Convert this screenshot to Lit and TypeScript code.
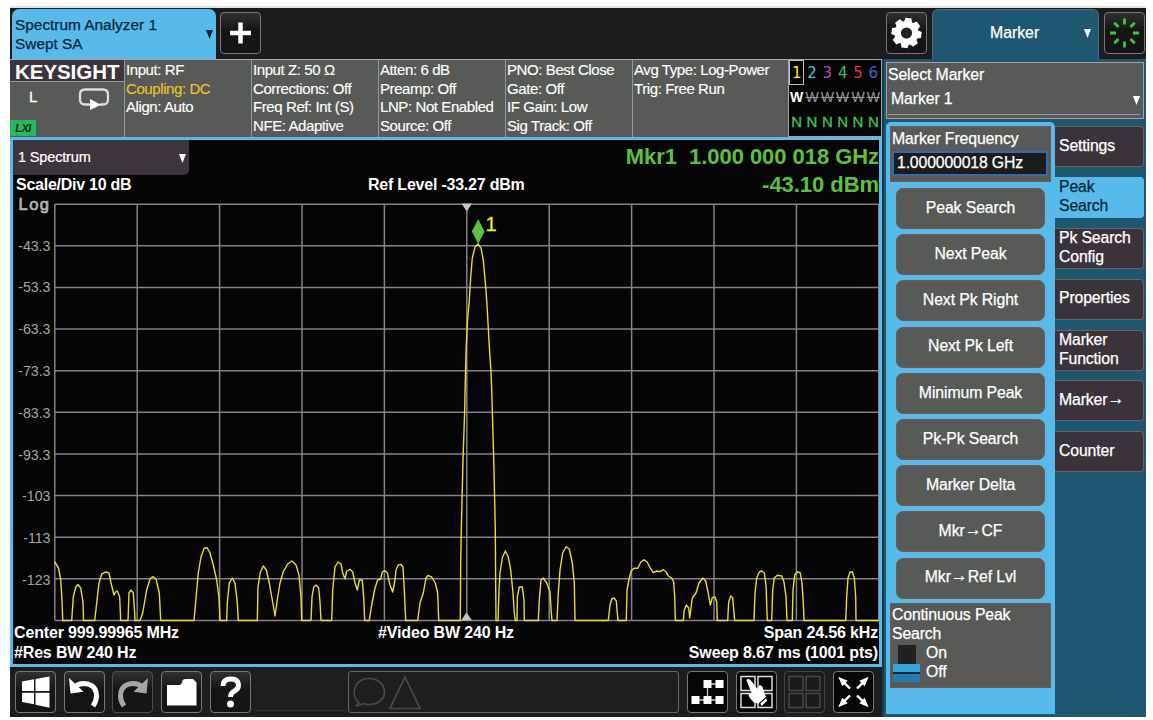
import { LitElement, html, svg, css } from "lit";
import { customElement, state } from "lit/decorators.js";
import { classMap } from "lit/directives/class-map.js";

const FLOOR = 620.5;

// Noise-floor lobes and the main carrier, each a run of points that starts and ends on the floor.
const TRACE: string =
  "54.5,561.7 58.5,568 60.7,580 62,600 62.7,F 71.7,F 73.3,597 75.7,587 78,584.5 80.7,588 83,602 83.5,F " +
  "94.7,F 96.7,603 99,583 101.7,574 106,572 109,573 111,583 114,595 115.5,592 117.3,591 119.7,597 120.7,F " +
  "128,F 129,593 131,590 133.3,593 134.7,613 135,F 140,F 142.7,613 146.7,590 150,579 153,576.5 156,579 159.3,593 160.7,F " +
  "194,F 196,598 198.3,573 201,557 204,548.5 207,547.5 210,553 213.3,565 216.7,580 219,598 220,F " +
  "226.7,F 227.3,603 229.3,583 232.3,578 235,583 237.3,603 238.3,F " +
  "257.3,F 258,587 260.3,572 263.3,566 266.3,570 269.3,583 272.7,602 275,616 277.7,597 280,583 283.3,571.7 287.7,564 292,561 296,565 299,575 301,597 301.7,F " +
  "311,F 312,597 313.7,587 316,585 318.7,588 320,602 321,F " +
  "331.7,F 332.7,590 335,567 338,562 341,564 342.7,573 345,579 346.7,571 350,569.3 352.7,572 355,583 357.3,590 359.3,580 362.3,580 363.7,597 364.7,F " +
  "369.3,F 371.7,605 375,588 377.7,580 380.7,579 382.3,572 384.7,570.7 387.3,572.7 390,585 392.7,592 395,580 396,570 398.3,565 400.7,564.3 403,567 404.3,590 405.7,F " +
  "417.7,F 420,603 423.3,593 426,578 428,575.3 431.7,577 435.3,583 437.7,593 438.7,F " +
  "460.3,F 460.7,563 461.3,530 463,460 464.7,410 465,393 466,353 467.3,323 469.3,300 470.7,277 472.3,258 475,247 478,244 481,248 483.3,260 485.7,287 487,305 488.3,328 489.7,353 491,372 491.7,390 492.3,410 494,470 495.3,530 495.7,587 496,F " +
  "498,F 499,590 500,573 502.3,558 505.3,551 508.3,557 510.7,570 513,593 514.3,613 515.3,F " +
  "517,F 517.3,597 519.3,587 522.3,587 524,600 524.3,F 538.3,F 539.3,600 541,580 543.3,578 546.7,583 550,592 551.3,613 552,F " +
  "557,F 558.3,593 560,570 562.7,553 566,546.7 569.3,549 572.3,563 574.3,583 575,F " +
  "608.3,F 610,605 611.7,599 614,598 616.3,601 617.3,613 618,F " +
  "626.3,F 627,590 629.3,578 631.3,570.7 634,568.3 637.7,568.3 640.7,562.3 644,559.7 647.3,562.3 650,567.7 653.3,572.7 656.7,571 660,571.7 663.3,569.7 666,571.7 668.3,576 671.7,578 673.7,582 674.7,597 675.3,F " +
  "683.3,F 684.3,610 686.3,605 688.7,608 689.7,618 692.3,598 696,593 699,583 702.7,578 705.7,581 708,592 710.3,605 712.3,597.7 715,596.7 716.7,602 717.3,F " +
  "727.7,F 728.7,602 730.7,596 732.7,597.7 734,613 734.7,F " +
  "754,F 755,593 756.7,578 759.3,572 761.7,571 764.3,573 766,585 767.3,F " +
  "771.7,F 772.7,590 774.3,578 777.3,575.3 781.7,576 784,582 786,597 787,F " +
  "792.3,F 793,590 794.7,575 797.3,571.7 800.3,573 802,583 803.3,603 804,F " +
  "845.7,F 846.7,597 848,578 850,572.3 852.3,571.7 854.3,578 855.7,597 856,F 879,F";

const STATUS: string[][] = [
  ["Input: RF", "Coupling: DC", "Align: Auto"],
  ["Input Z: 50 Ω", "Corrections: Off", "Freq Ref: Int (S)", "NFE: Adaptive"],
  ["Atten: 6 dB", "Preamp: Off", "LNP: Not Enabled", "Source: Off"],
  ["PNO: Best Close", "Gate: Off", "IF Gain: Low", "Sig Track: Off"],
  ["Avg Type: Log-Power", "Trig: Free Run"],
];

const ACTIONS = ["Peak Search", "Next Peak", "Next Pk Right", "Next Pk Left", "Minimum Peak",
  "Pk-Pk Search", "Marker Delta", "Mkr→CF", "Mkr→Ref Lvl"];
const TABS = ["Settings", "Peak Search", "Pk Search Config", "Properties", "Marker Function", "Marker→", "Counter"];
const LEVELS = ["-43.3", "-53.3", "-63.3", "-73.3", "-83.3", "-93.3", "-103", "-113", "-123"];

const caret = html`<svg class="caret" width="7" height="9" viewBox="0 0 7 9"><path d="M0 0h7L3.5 9z" fill="currentColor"/></svg>`;

// Lifts the arrow glyph so that it sits at the middle of the lowercase letters.
const label = (s: string) => {
  const [a, b] = s.split("→");
  return b === undefined ? html`<span>${s}</span>` : html`<span>${a}<span class="to">→</span>${b}</span>`;
};

const icon = (body: unknown) => html`<svg width="39" height="40" viewBox="0 0 39 40">${body}</svg>`;

const arrow = (angle: number) => svg`<g transform="rotate(${angle} 19.5 20)">
  <path d="M19.500 15V6" stroke="#fff" stroke-width="2.300"/><path d="M19.500-1.500L23.300 8h-7.600z" fill="#fff"/></g>`;

const ICONS = {
  plus: icon(svg`<path d="M19.500 9.500v21M9 20h21" stroke="#fff" stroke-width="4.500"/>`),
  gear: icon(svg`<g fill="#fff">${[0, 45, 90, 135].map(a => svg`<path d="M15.500 9l1-4h6l1 4v22l-1 4h-6l-1-4z" transform="rotate(${a + 8} 19.500 20)"/>`)}
    <circle cx="19.5" cy="20" r="12"/></g><circle cx="19.5" cy="20" r="5.600" fill="#222"/>`),
  busy: icon(svg`${[0, 45, 90, 135, 180, 225, 270, 315].map(a => svg`<path d="M19.500 5.500v6" stroke="#3fc83f" stroke-width="2.800" transform="rotate(${a} 19.500 20)"/>`)}`),
  windows: icon(svg`<path d="M6 9.500l12-2.200V19H6zM19.500 7l14-2.500V19h-14zM6 20.700h12v11.500L6 30zM19.500 20.700h14v15l-14-3z" fill="#fff"/>`),
  undo: icon(svg`<path d="M9.500 15C17 8.500 31.500 11 31.500 24q0 5-3.500 10" fill="none" stroke="#fff" stroke-width="5"/><path d="M4 6l1.500 15.500 13-1.800z" fill="#fff"/>`),
  redo: icon(svg`<path d="M29.500 15C22 8.500 7.500 11 7.500 24q0 5 3.500 10" fill="none" stroke="#a6a6a6" stroke-width="5"/><path d="M35 6l-1.500 15.500-13-1.800z" fill="#a6a6a6"/>`),
  folder: icon(svg`<path d="M5 33.500V13h12q2.500 0 3-3t3.500-3H31l3.500 3.500v23z" fill="#fff"/>`),
  help: icon(svg`<path d="M12 14q0-7 8-7 7.500 0 7.500 6 0 4-4 6t-4 6" fill="none" stroke="#fff" stroke-width="5"/><circle cx="19.5" cy="32" r="3.500" fill="#fff"/>`),
  blocks: icon(svg`<path d="M19.500 12v16M19 12h13M8 28h24" stroke="#ccc" stroke-width="1.300" fill="none"/><path d="M15.500 8h8v8h-8zM27.500 8h8v8h-8zM3.500 24h8v8h-8zM15.500 24h8v8h-8zM27.500 24h8v8h-8z" fill="#fff"/>`),
  touch: icon(svg`<path d="M4 4.500h14v14H4zM21 4.500h14v14H21zM4 21.500h14v14H4zM21 21.500h14v14H21z" fill="none" stroke="#ddd" stroke-width="1.500"/>
    <path d="M9.500 8.500q1-2.500 4-.5l7 9 1.500-3.500q2-1 3.500 1.500l3.500 10-7.500 6.500q-6-.500-9.500-7-1.500-4 3-2.500z" fill="#fff"/><path d="M23 31.500l6-5.500 1.500 2.500-6 6z" fill="#fff" stroke="#111" stroke-width=".7"/>`),
  grid: icon(svg`<path d="M4 4.500h14v14H4zM21 4.500h14v14H21zM4 21.500h14v14H4zM21 21.500h14v14H21z" fill="none" stroke="#484848" stroke-width="1.500"/>`),
  expand: icon(svg`${[45, 135, 225, 315].map(arrow)}`),
};

@customElement("spectrum-plot")
class SpectrumPlot extends LitElement {
  static styles = css`
    :host { display: block; height: 428px; font-weight: normal; }
    svg { display: block; }
    text { font-family: "Liberation Sans", Arial, sans-serif; }
    .grid { stroke: #858285; stroke-width: 1.5; }
    .level { fill: #a4a4a4; font-size: 14.2px; text-anchor: end; }
    .unit { fill: #b4b4b4; font-size: 16.5px; stroke: #b4b4b4; stroke-width: .7; }
    .id { fill: #f0ea2c; font-size: 20px; stroke: #f0ea2c; stroke-width: .3; }
    .trace { fill: none; stroke: #e4df32; stroke-width: 1.4; stroke-linejoin: round; }
  `;
  render() {
    const cols = Array.from({ length: 11 }, (_, i) => 54.8 + i * 82.4);
    const rows = Array.from({ length: 11 }, (_, i) => 204.2 + i * 41.63);
    return html`<svg width="866" height="428" viewBox="13 196 866 428">
      <g class="grid">
        ${cols.map(x => svg`<line x1=${x} x2=${x} y1="204" y2="620.5"/>`)}
        ${rows.map(y => svg`<line x1="54.8" x2="879" y1=${y} y2=${y}/>`)}
      </g>
      <path d="M461.500 203.500h10.500l-5.200 8zM461 620.500h11l-5.500-8z" fill="#c4c4c4"/>
      <text class="unit" x="18.500" y="210" textLength="30.500">Log</text>
      ${LEVELS.map((l, i) => svg`<text class="level" x="50.500" y=${250.5 + i * 41.8}>${l}</text>`)}
      <polyline class="trace" points=${TRACE.replace(/F/g, String(FLOOR))}/>
      <path d="M478.200 219l6.300 12.500-6.300 12.500-6.300-12.500z" fill="#5cc142"/>
      <text class="id" x="485.500" y="231">1</text>
    </svg>`;
  }
}

@customElement("app-root")
class AppRoot extends LitElement {
  @state() private tab = 1;

  static styles = css`
    :host { display: block; width: 1153px; height: 720px; background: #fff; box-sizing: border-box; padding: 6px 7px 0 10px; overflow: hidden;
      font: 15px/18.5px "Liberation Sans", Arial, sans-serif; color: #fff; }
    * { box-sizing: border-box; }
    svg { display: block; flex: none; }
    .screen { display: grid; grid-template-columns: 872px 264px; width: 1136px; height: 711px; border-top: 2px solid #dfe1e3; background: #1c1c1c; }
    .main, .side { display: flex; flex-direction: column; min-width: 0; }
    .topbar { display: flex; height: 51px; align-items: flex-start; }
    .mode { width: 204px; height: 50px; margin: 1px 0 0 2px; padding: 7px 10px 0 3px; border-radius: 7px 7px 0 0; background: #57baea; color: #0b2736; display: flex;
      justify-content: space-between; font-size: 15.4px; -webkit-text-stroke: .25px currentColor; }
    .mode .caret { margin: 14px -7px 0 0; color: #062231; }
    .btn { width: 41px; height: 42px; border: 1.5px solid #777; border-radius: 4px; background: linear-gradient(#303030, #151515 45%, #151515); display: grid; place-items: center; overflow: hidden; flex: none; }
    .btn.dark { background: #060606; }
    .btn.dim { border-color: #444; background: #1b1b1b; }
    .btn.redo { border-color: #4c4c4c; }
    .add { margin: 4px 0 0 4px; }
    .status { display: flex; height: 78px; background: #575a57; border-top: 1px solid #a5a5a5; }
    .brand { width: 114px; flex: none; display: flex; flex-direction: column; }
    .logo { height: 22px; background: #3c353b; border-bottom: 1px solid #999; font-weight: bold; font-size: 20.5px; line-height: 24px; padding-left: 5px; letter-spacing: -.05px; white-space: nowrap; }
    .sweep { display: flex; height: 38px; padding: 6px 14px 0 19px; justify-content: space-between; -webkit-text-stroke: .3px currentColor; }
    .lxi { width: 26px; height: 16px; background: #2fb45f; color: #082d16; font: italic bold 11px/17px "Liberation Sans", sans-serif; text-align: center; letter-spacing: -.5px; }
    .cell { width: 127px; flex: none; border-left: 1.5px solid #979797; padding: 1px 0 0 1px; font-size: 15px; letter-spacing: -.41px; white-space: pre; -webkit-text-stroke: .15px currentColor; }
    .cell:nth-child(6) { flex: 1; }
    .warn { color: #efc12c; }
    .traces { width: 94px; background: #050505; border: 1px solid #a5a5a5; border-top: 0; display: grid; grid-template: 25px 25px 26px / repeat(6, 1fr); font: 15px/26px "DejaVu Sans", sans-serif; text-align: center; }
    .traces .box { outline: 1.5px solid #bbd; outline-offset: -1px; }
    .t1 { color: #eee837; } .t2 { color: #4cc6d0; } .t3 { color: #b545b8; } .t4 { color: #45bd69; } .t5 { color: #ef2b55; } .t6 { color: #3567cb; }
    .w { font: bold 14px/24px "Liberation Sans", sans-serif; }
    .w.off { color: #999; font-weight: normal; text-decoration: line-through; }
    .n { color: #3fc553; font: 15px/24px "Liberation Sans", sans-serif; -webkit-text-stroke: .3px currentColor; }
    .panel { height: 530px; border: 3px solid #57baea; background: #050505; display: flex; flex-direction: column; font-weight: bold; font-size: 16px; }
    .head { display: flex; height: 56px; }
    .view { width: 176px; height: 35px; background: #3c353b; border-radius: 0 0 5px 0; padding: 8px 3px 0 5px; display: flex; justify-content: space-between; font-weight: normal; font-size: 14.5px; letter-spacing: -.15px; -webkit-text-stroke: .2px currentColor; }
    .view .caret { margin-top: 6px; }
    .left-head { display: flex; flex-direction: column; }
    .scale { padding: 1px 0 0 3px; letter-spacing: -.25px; }
    .ref { padding-top: 36px; margin-left: 179px; letter-spacing: -.22px; white-space: nowrap; }
    .readout { flex: 1; color: #5cc142; font-size: 22px; line-height: 28px; text-align: right; white-space: pre; padding-top: 3px; letter-spacing: -.05px; }
    .foot { display: grid; grid-template-columns: 1fr 1fr 1fr; height: 40px; line-height: 20px; padding: 0 1px; letter-spacing: -.16px; margin-top: -1px; }
    .foot > :nth-child(2) { text-align: center; }
    .foot > :nth-child(3) { text-align: right; }
    .toolbar { display: flex; height: 50px; padding: 4px 8px 0 5px; gap: 7.7px; background: #1e1e1e; }
    .rule { width: 90px; height: 40px; border-bottom: 1px solid #303030; margin: 0 -6px 0 -2px; }
    .msg { flex: 1; height: 42px; border: 1.5px solid #666; border-radius: 3px; }
    .side { background: #1d5770; border-left: 2px solid #123d50; padding-left: 2px; font-size: 15.8px; -webkit-text-stroke: .25px currentColor; }
    .side .topbar { background: #1c1c1c; margin-left: -4px; padding: 4px 0 0 4px; }
    .marker { width: 167px; height: 50px; margin: -3px 5px 0 5px; border-radius: 6px 6px 0 0; background: #1d5770; border: 1px solid #526e7a; border-bottom: 0; display: flex; align-items: center; padding: 0 7px 2px 57px; justify-content: space-between; }
    .select { width: 258px; height: 57px; margin-top: 3px; flex: none; background: #575a57; border: 1.5px solid #aaa19d; padding: 3px 3px 3px 1px; display: flex; flex-direction: column; letter-spacing: -.1px; }
    .select div { display: flex; justify-content: space-between; height: 32px; padding: 5px 0 0 3px; border-bottom: 1.5px solid #999; }
    .select .caret { margin-top: 6px; }
    .body { display: flex; margin-top: 3px; height: 592px; }
    .sheet { width: 169px; height: 592px; background: #57baea; border-radius: 5px 5px 0 0; padding: 4px; display: flex; flex-direction: column; }
    .group { width: 161px; background: #575a57; border: 1.5px solid #74594e; flex: none; letter-spacing: -.1px; }
    .freq { height: 56px; padding: 3px 1px 0; }
    .freq input { display: block; width: 156px; height: 25px; margin-top: 2px; border: 2px solid #3568b2; background: #1c1c1c; color: #fff; padding: 0 3px; font: inherit; letter-spacing: -.15px; -webkit-text-stroke: .25px currentColor; }
    .acts { display: flex; flex-direction: column; gap: 5.2px; padding: 6px 6px 4.5px; }
    .act { height: 41px; flex: none; border-radius: 7px; border: 1.5px solid #75594d; background: #575a57; display: grid; place-items: center; letter-spacing: -.1px; padding-bottom: 1px; }
    .to { font-size: 17px; line-height: 1px; vertical-align: 1.5px; }
    .cont { height: 85px; padding: 2px 0 0 1px; letter-spacing: -.13px; }
    .toggle { display: flex; gap: 6px; margin-top: 1px; }
    .knob { width: 27px; height: 37px; display: flex; flex-direction: column; align-items: center; margin: 1px 0 0 1px; }
    .slot { width: 18px; height: 19px; background: #222; }
    .lever { width: 27px; height: 18px; background: linear-gradient(#37a5d7 0 45%, #123 45% 55%, #237eb0 55%); }
    .tabs { display: flex; flex-direction: column; gap: 9.9px; padding-top: 4px; }
    .tab { width: 89px; height: 41px; border: 1.5px solid #725e5d; border-left: 0; border-radius: 0 4px 4px 0; background: #3a343a; display: flex; align-items: center; padding: 0 0 1px 4px; letter-spacing: -.13px; }
    .tab.on { background: #57baea; border-color: #57baea; color: #0b2736; padding-right: 30px; }
  `;

  render() {
    return html`<div class="screen">
      <div class="main">
        <div class="topbar">
          <div class="mode"><div>Spectrum Analyzer 1<br>Swept SA</div>${caret}</div>
          <div class="btn add">${ICONS.plus}</div>
        </div>
        <div class="status">
          <div class="brand">
            <div class="logo">KEYSIGHT</div>
            <div class="sweep"><span>L</span><svg width="32" height="24" viewBox="0 0 32 24"><path d="M12 16.500H7q-5 0-5-5V6.500q0-5 5-5h18q5 0 5 5v5q0 5-5 5h-3" fill="none" stroke="#ddd" stroke-width="2.300"/><path d="M12 11l11 5.700L12 22z" fill="#fff"/></svg></div>
            <div class="lxi">LXI</div>
          </div>
          ${STATUS.map(c => html`<div class="cell">${c.map(l => html`<div class=${classMap({ warn: l.startsWith("Coupling") })}>${l}</div>`)}</div>`)}
          <div class="traces">
            ${[1, 2, 3, 4, 5, 6].map(n => html`<span class="t${n} ${n === 1 ? "box" : ""}">${n}</span>`)}
            ${[1, 2, 3, 4, 5, 6].map(n => html`<span class="w ${n > 1 ? "off" : ""}">W</span>`)}
            ${[1, 2, 3, 4, 5, 6].map(() => html`<span class="n">N</span>`)}
          </div>
        </div>
        <div class="panel">
          <div class="head">
            <div class="left-head"><div class="view"><span>1 Spectrum</span>${caret}</div><div class="scale">Scale/Div 10 dB</div></div>
            <div class="ref">Ref Level -33.27 dBm</div>
            <div class="readout">Mkr1  1.000 000 018 GHz<br>-43.10 dBm</div>
          </div>
          <spectrum-plot></spectrum-plot>
          <div class="foot">
            <div>Center 999.99965 MHz<br>#Res BW 240 Hz</div><div>#Video BW 240 Hz</div><div>Span 24.56 kHz<br>Sweep 8.67 ms (1001 pts)</div>
          </div>
        </div>
        <div class="toolbar">
          <div class="btn">${ICONS.windows}</div><div class="btn">${ICONS.undo}</div><div class="btn redo">${ICONS.redo}</div>
          <div class="btn">${ICONS.folder}</div><div class="btn">${ICONS.help}</div>
          <div class="rule"></div>
          <div class="msg"><svg width="80" height="40" viewBox="0 0 80 40"><path d="M10 31c-9-8-5-24.500 10-24.500 9 0 15.500 6 15.500 13.500 0 10-12 15-21.500 11.500q-3 2.500-7.500 2.500 3-1.500 3.500-3zM56 5l15 31.500H41z" fill="none" stroke="#484a4a" stroke-width="1.700"/></svg></div>
          <div class="btn dark">${ICONS.blocks}</div><div class="btn dark">${ICONS.touch}</div>
          <div class="btn dim">${ICONS.grid}</div><div class="btn dark">${ICONS.expand}</div>
        </div>
      </div>
      <div class="side">
        <div class="topbar">
          <div class="btn">${ICONS.gear}</div>
          <div class="marker"><span>Marker</span>${caret}</div>
          <div class="btn">${ICONS.busy}</div>
        </div>
        <div class="select">Select Marker<div><span>Marker 1</span>${caret}</div></div>
        <div class="body">
          <div class="sheet">
            <div class="group freq">Marker Frequency<input .value=${"1.000000018 GHz"}></div>
            <div class="acts">${ACTIONS.map(a => html`<div class="act">${label(a)}</div>`)}</div>
            <div class="group cont">Continuous Peak<br>Search
              <div class="toggle"><div class="knob"><div class="slot"></div><div class="lever"></div></div><div>On<br>Off</div></div>
            </div>
          </div>
          <div class="tabs">${TABS.map((t, i) => html`<div class="tab ${classMap({ on: i === this.tab })}" @click=${() => (this.tab = i)}>${label(t)}</div>`)}</div>
        </div>
      </div>
    </div>`;
  }
}
